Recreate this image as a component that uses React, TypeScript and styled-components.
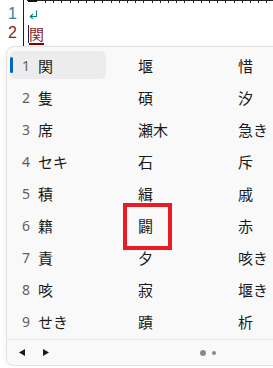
import styled, { createGlobalStyle } from "styled-components";

const GlobalStyle = createGlobalStyle`
  html, body {
    margin: 0;
    padding: 0;
    background: #ffffff;
    overflow: hidden;
  }
  body {
    font-family: "Noto Sans", "Noto Sans CJK JP", sans-serif;
  }
`;

const candidates: string[][] = [
  ["関", "堰", "惜"],
  ["隻", "碩", "汐"],
  ["席", "瀬木", "急き"],
  ["セキ", "石", "斥"],
  ["積", "緝", "戚"],
  ["籍", "闢", "赤"],
  ["責", "夕", "咳き"],
  ["咳", "寂", "堰き"],
  ["せき", "蹟", "析"],
];

const Ruler = () => {
  const ticks = [];
  for (let x = 45; x < 273; x += 8.2) {
    ticks.push(<rect key={x} x={Math.round(x)} y={0} width={1} height={3} fill="#222" />);
  }
  return (
    <RulerSvg width="273" height="4" viewBox="0 0 273 4">
      <rect x={27} y={0} width={246} height={1} fill="#222" />
      <rect x={28} y={0} width={9} height={2} fill="#111" />
      {ticks}
    </RulerSvg>
  );
};

export default function App() {
  return (
    <>
      <GlobalStyle />
      <Editor>
        <Ruler />
        <Gutter>
          <LineNo color="#3a78b0">1</LineNo>
          <LineNo color="#8a2525">2</LineNo>
        </Gutter>
        <TextArea>
          <Line>
            <ReturnMark viewBox="0 0 9 9" width="9" height="9">
              <path d="M7.5 0.5 V6.5 H1.5" fill="none" stroke="#008080" strokeWidth="1.1" />
              <path d="M4 4 L1.2 6.5 L4 9" fill="none" stroke="#008080" strokeWidth="1.1" />
            </ReturnMark>
          </Line>
          <Line>
            <Caret />
            <Composing>関</Composing>
          </Line>
        </TextArea>
      </Editor>

      <Popup>
        <List>
          {candidates.map((row, r) =>
            row.map((word, c) => (
              <Cell key={`${r}-${c}`} selected={r === 0 && c === 0}>
                {r === 0 && c === 0 && <SelectBar />}
                {c === 0 && <Num>{r + 1}</Num>}
                <Word>{word}</Word>
                {r === 5 && c === 1 && <Mark />}
              </Cell>
            ))
          )}
        </List>
        <Footer>
          <Arrows>
            <Arrow viewBox="0 0 6 7" width="6" height="7">
              <path d="M6 0 L0 3.5 L6 7 Z" fill="#1a1a1a" />
            </Arrow>
            <Arrow viewBox="0 0 6 7" width="6" height="7">
              <path d="M0 0 L6 3.5 L0 7 Z" fill="#1a1a1a" />
            </Arrow>
          </Arrows>
          <Dots>
            <Dot size={6} />
            <Dot size={4} />
          </Dots>
        </Footer>
      </Popup>
    </>
  );
}

const Editor = styled.div`
  position: relative;
  display: flex;
  height: 46px;
  padding-top: 4px;
  box-sizing: border-box;
`;

const RulerSvg = styled.svg`
  position: absolute;
  top: 0;
  left: 0;
  display: block;
`;

const Gutter = styled.div`
  width: 24px;
  box-sizing: border-box;
  border-right: 1px solid #1a1a1a;
  margin-top: -4px;
  padding-top: 4px;
  padding-right: 6px;
  display: flex;
  flex-direction: column;
  align-items: flex-end;
`;

const LineNo = styled.div<{ color: string }>`
  height: 19px;
  line-height: 19px;
  font-family: "Liberation Sans", sans-serif;
  font-size: 16px;
  color: ${(p) => p.color};
`;

const TextArea = styled.div`
  display: flex;
  flex-direction: column;
  padding-left: 4px;
`;

const Line = styled.div`
  position: relative;
  height: 19px;
  display: flex;
  align-items: center;
`;

const ReturnMark = styled.svg`
  display: block;
  margin-left: 1px;
  margin-top: 1px;
`;

const Caret = styled.span`
  width: 1px;
  height: 18px;
  background: #1a1a6a;
  margin-top: 3px;
`;

const Composing = styled.span`
  font-family: "Noto Sans CJK JP", sans-serif;
  font-size: 15px;
  line-height: 19px;
  color: #8a1f1f;
  margin-top: 4px;
  border-bottom: 2px solid #7a0000;
`;

const Popup = styled.div`
  margin-left: 6px;
  width: 300px;
  height: 320px;
  box-sizing: border-box;
  background: #f9f9f9;
  border: 1px solid #e3e3e3;
  border-radius: 8px;
  display: flex;
  flex-direction: column;
  box-shadow: 0 2px 6px rgba(0, 0, 0, 0.06);
`;

const List = styled.div`
  display: grid;
  grid-template-columns: repeat(3, 96px);
  grid-auto-rows: 28px;
  column-gap: 4px;
  row-gap: 4px;
  padding: 4px 3px;
  border-bottom: 1px solid #e5e5e5;
`;

const Cell = styled.div<{ selected: boolean }>`
  position: relative;
  display: flex;
  align-items: center;
  padding-left: 12px;
  border-radius: 5px;
  background: ${(p) => (p.selected ? "#ececec" : "transparent")};
`;

const SelectBar = styled.span`
  position: absolute;
  left: 0;
  top: 6px;
  width: 3px;
  height: 16px;
  border-radius: 2px;
  background: #0067c0;
`;

const Num = styled.span`
  width: 16px;
  font-family: "Noto Sans", sans-serif;
  font-size: 14px;
  color: #5f5f5f;
`;

const Word = styled.span`
  position: absolute;
  left: 28px;
  font-family: "Noto Sans CJK JP", sans-serif;
  font-size: 15px;
  color: #1b1b1b;
`;

const Mark = styled.span`
  position: absolute;
  left: 13px;
  top: -8px;
  width: 49px;
  height: 47px;
  box-sizing: border-box;
  border: 4px solid #e81c24;
`;

const Footer = styled.div`
  flex: 1;
  display: flex;
  align-items: center;
  padding-left: 12px;
`;

const Arrows = styled.div`
  display: flex;
  align-items: center;
  gap: 18px;
`;

const Arrow = styled.svg`
  display: block;
`;

const Dots = styled.div`
  display: flex;
  align-items: center;
  gap: 6px;
  margin-left: 151px;
`;

const Dot = styled.span<{ size: number }>`
  width: ${(p) => p.size}px;
  height: ${(p) => p.size}px;
  border-radius: 50%;
  background: #8a8a8a;
`;
